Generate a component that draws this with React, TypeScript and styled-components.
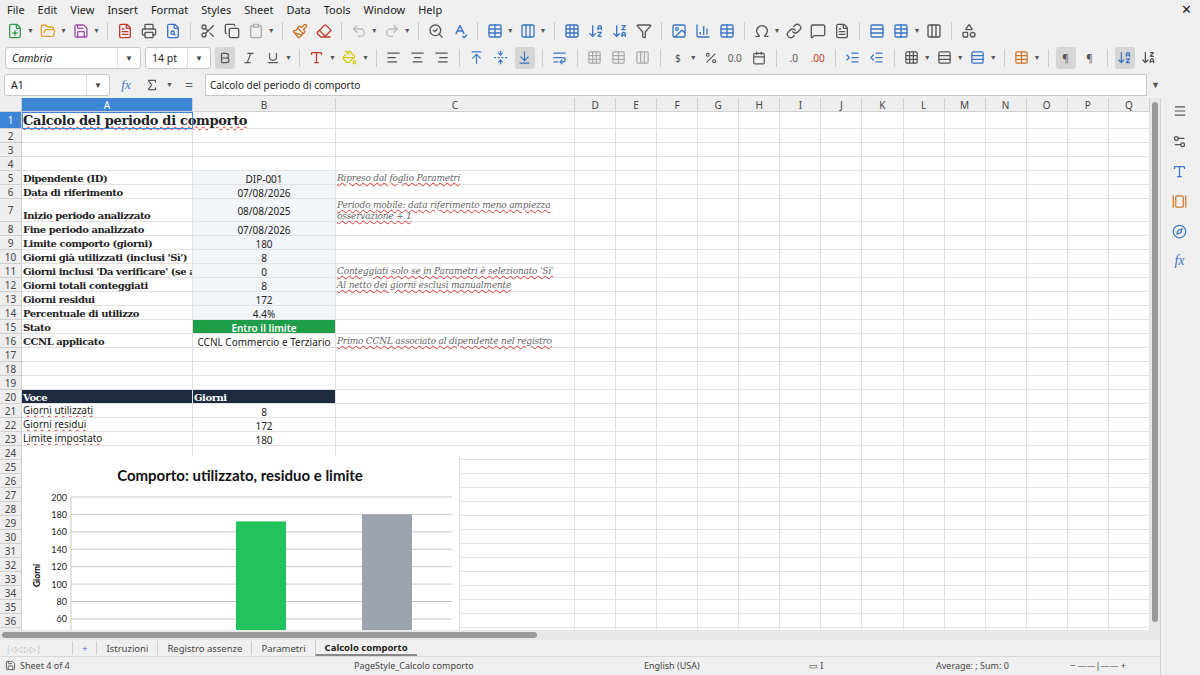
import React from "react";
import styled, { createGlobalStyle } from "styled-components";
import {
  FilePlus, FolderOpen, Save, FileText, Printer, FileSearch, Scissors, Copy, Clipboard, Paintbrush, Eraser,
  Undo2, Redo2, SearchCheck, SpellCheck, Table, Columns3, ArrowDownAZ, ArrowDownZA, Filter, Image, BarChart3,
  Omega, Link, MessageSquare, Sigma, Bold, Italic, Underline, AlignLeft, AlignCenter, AlignRight,
  ArrowUpToLine, FoldVertical, ArrowDownToLine, WrapText, Percent, Calendar, Menu, Settings2, Type, GalleryHorizontal,
  Compass, Shapes, Rows3, Grid3x3, IndentIncrease, IndentDecrease, PaintBucket
} from "lucide-react";

const G = createGlobalStyle`
  html,body{margin:0;padding:0;width:1200px;height:675px;overflow:hidden;background:#efefef;font-family:"Noto Sans","Open Sans",sans-serif;}
`;

const Page = styled.div`width:1200px;height:675px;display:flex;flex-direction:column;background:#f0f0f0;`;
const MenuBar = styled.div`height:18px;display:flex;align-items:center;gap:13px;padding:0 7px;font-size:11px;color:#222;position:relative;`;
const CloseX = styled.span`position:absolute;right:8px;top:0;font-size:13px;`;
const Tool = styled.div`height:25px;display:flex;align-items:center;gap:4px;padding:0 5px;color:#555;`;
const Tool2 = styled(Tool)`height:29px;`;
const Sep = styled.div`width:1px;height:18px;background:#ccc;margin:0 3px;`;
const Ic = styled.span<{ c?: string; on?: boolean }>`display:inline-flex;align-items:center;justify-content:center;width:20px;height:22px;border-radius:3px;color:${p => p.c || "#555"};background:${p => p.on ? "#d6d6d6" : "transparent"};font-size:10px;`;
const Caret = styled.span`font-size:7px;color:#555;margin-left:-2px;`;
const Combo = styled.div<{ w: number }>`width:${p => p.w}px;height:22px;border:1px solid #c8c8c8;border-radius:3px;background:#fff;display:flex;align-items:center;font-size:10.5px;padding-left:6px;box-sizing:border-box;position:relative;color:#222;`;
const ComboBtn = styled.span`position:absolute;right:0;top:0;bottom:0;width:22px;border-left:1px solid #ddd;display:flex;align-items:center;justify-content:center;font-size:8px;color:#444;`;
const FormulaRow = styled.div`height:25px;display:flex;align-items:center;gap:6px;padding:0 4px;`;
const Input = styled.div`flex:1;height:20px;border:1px solid #c8c8c8;background:#fff;font-size:10px;display:flex;align-items:center;padding-left:4px;color:#222;`;

const Main = styled.div`display:flex;flex:1;min-height:0;padding-top:1px;`;
const SheetArea = styled.div`width:1160px;display:flex;flex-direction:column;`;
const GridWrap = styled.div`display:flex;height:532px;`;
const Grid = styled.div`width:1150px;height:532px;overflow:hidden;position:relative;background:#fff;`;
const VScroll = styled.div`width:10px;background:#e8e8e8;position:relative;`;
const VThumb = styled.div`position:absolute;left:2px;top:4px;width:6px;height:520px;background:#9a9a9a;border-radius:3px;`;
const Row = styled.div<{ h: number }>`display:flex;height:${p => p.h}px;`;
const Cell = styled.div<{ w: number; bg?: string; align?: string; spill?: boolean }>`width:${p => p.w}px;flex:none;box-sizing:border-box;border-right:1px solid #e2e2e2;border-bottom:1px solid #e2e2e2;background:${p => p.bg || "transparent"};display:flex;align-items:flex-end;justify-content:${p => p.align || "flex-start"};overflow:${p => p.spill ? "visible" : "hidden"};white-space:nowrap;font-size:10px;color:#222;padding:0 1px;position:relative;`;
const Head = styled(Cell) <{ sel?: boolean }>`background:${p => p.sel ? "#3c84d6" : "#eeeeee"};color:${p => p.sel ? "#fff" : "#444"};align-items:center;justify-content:center;border-color:#cfcfcf;font-size:10px;`;
const Label = styled.span`font-family:"DejaVu Serif","Liberation Serif",serif;font-weight:bold;font-size:10px;letter-spacing:-0.45px;text-decoration:underline wavy #d33;text-decoration-thickness:1px;`;
const Title = styled(Label)`font-size:13px;letter-spacing:-0.3px;`;
const Note = styled.span<{ wrap?: boolean }>`font-family:"DejaVu Serif",serif;font-style:italic;font-size:9px;letter-spacing:-0.2px;color:#666;text-decoration:underline wavy #d33;text-decoration-thickness:1px;line-height:11px;white-space:${p => p.wrap ? "normal" : "nowrap"};align-self:${p => p.wrap ? "flex-start" : "flex-end"};margin-top:1px;`;
const Plain = styled.span`font-size:10px;font-family:"Noto Sans",sans-serif;text-decoration:underline wavy #d33;text-decoration-thickness:1px;`;
const Val = styled.span`align-self:flex-start;margin-top:1px;font-size:10px;`;
const SelBox = styled.div`position:absolute;left:22px;top:14px;width:171px;height:17px;border:1.5px solid #3c84d6;box-sizing:border-box;pointer-events:none;`;

const Chart = styled.div`position:absolute;left:22px;top:358px;width:437px;height:190px;background:#fff;border-right:1px solid #ddd;`;
const ChartTitle = styled.div`text-align:center;font-family:"Lato","Noto Sans",sans-serif;font-weight:bold;font-size:15px;margin-top:10px;color:#111;margin-left:-1px;`;

const HScroll = styled.div`height:10px;background:#e8e8e8;position:relative;`;
const HThumb = styled.div`position:absolute;left:2px;top:2px;width:535px;height:6px;background:#9a9a9a;border-radius:3px;`;
const Tabs = styled.div`height:16px;display:flex;align-items:center;font-size:9.5px;color:#444;`;
const Tab = styled.div<{ on?: boolean }>`padding:0 9px;border-left:1px solid #ccc;height:14px;display:flex;align-items:center;${p => p.on ? "font-weight:bold;color:#222;border-bottom:2px solid #888;" : ""}`;
const Status = styled.div`height:17px;display:flex;align-items:center;font-size:9px;color:#444;border-top:1px solid #d8d8d8;`;
const Side = styled.div`width:37px;display:flex;flex-direction:column;align-items:center;gap:8px;padding-top:2px;border-left:1px solid #d0d0d0;`;

const colW = [22, 171, 143, 239, ...Array(14).fill(41.07)];
const colN = ["", "A", "B", "C", "D", "E", "F", "G", "H", "I", "J", "K", "L", "M", "N", "O", "P", "Q"];

type RD = { a?: React.ReactNode; b?: React.ReactNode; c?: React.ReactNode; h?: number; bbg?: string; dark?: boolean; spillA?: boolean };
const L = (t: string) => <Label>{t}</Label>;
const N = (t: string) => <Note>{t}</Note>;
const V = (t: string) => <Val>{t}</Val>;
const rows: RD[] = [
  { a: <Title>Calcolo del periodo di comporto</Title>, h: 17, spillA: true },
  {}, {}, {},
  { a: L("Dipendente (ID)"), b: V("DIP-001"), c: N("Ripreso dal foglio Parametri"), bbg: "#f3f6f9" },
  { a: L("Data di riferimento"), b: V("07/08/2026"), bbg: "#f3f6f9" },
  { a: L("Inizio periodo analizzato"), b: <Val style={{ marginTop: 5 }}>08/08/2025</Val>, c: <Note wrap>Periodo mobile: data riferimento meno ampiezza osservazione + 1</Note>, h: 23, bbg: "#f3f6f9" },
  { a: L("Fine periodo analizzato"), b: V("07/08/2026"), bbg: "#f3f6f9" },
  { a: L("Limite comporto (giorni)"), b: V("180"), bbg: "#f3f6f9" },
  { a: L("Giorni già utilizzati (inclusi 'Sì')"), b: V("8"), bbg: "#f3f6f9" },
  { a: <Label>Giorni inclusi 'Da verificare' (se abili<span style={{ fontSize: 7 }}>▸</span></Label>, b: V("0"), c: N("Conteggiati solo se in Parametri è selezionato 'Sì'"), bbg: "#f3f6f9" },
  { a: L("Giorni totali conteggiati"), b: V("8"), c: N("Al netto dei giorni esclusi manualmente"), bbg: "#f3f6f9" },
  { a: L("Giorni residui"), b: V("172"), bbg: "#f3f6f9" },
  { a: L("Percentuale di utilizzo"), b: V("4.4%"), bbg: "#f3f6f9" },
  { a: L("Stato"), b: <Val style={{ color: "#fff", fontWeight: 600 }}>Entro il limite</Val>, bbg: "#1e9e48" },
  { a: L("CCNL applicato"), b: V("CCNL Commercio e Terziario"), c: N("Primo CCNL associato al dipendente nel registro") },
  {}, {}, {},
  { a: <Label style={{ color: "#fff", textDecoration: "none" }}>Voce</Label>, b: <Label style={{ color: "#fff", textDecoration: "none" }}>Giorni</Label>, dark: true },
  { a: <Plain>Giorni utilizzati</Plain>, b: V("8") },
  { a: <Plain>Giorni residui</Plain>, b: V("172") },
  { a: <Plain>Limite impostato</Plain>, b: V("180") },
];
while (rows.length < 38) rows.push({});

function ChartSvg() {
  const y = (v: number) => 13 + (200 - v) * 0.871;
  const ticks = [200, 180, 160, 140, 120, 100, 80, 60, 40];
  return (
    <svg width="437" height="160" style={{ display: "block" }}>
      {ticks.map(t => (
        <g key={t}>
          <line x1={49} x2={430} y1={y(t)} y2={y(t)} stroke="#c8c8c8" strokeWidth="1" />
          <text x={45} y={y(t) + 3.5} fontSize="9" textAnchor="end" fontFamily="Lato, sans-serif" fill="#222">{t}</text>
        </g>
      ))}
      <line x1={49} x2={49} y1={y(200)} y2={160} stroke="#c8c8c8" />
      <rect x={214} y={y(172)} width={50} height={200} fill="#22c35e" />
      <rect x={340} y={y(180)} width={50} height={200} fill="#9ca3ad" />
      <text transform={`translate(18,${y(110)}) rotate(-90)`} fontSize="8.5" fontWeight="bold" textAnchor="middle" fontFamily="Lato, sans-serif">Giorni</text>
    </svg>
  );
}

export default function App() {
  return (
    <Page>
      <G />
      <MenuBar>
        {["File", "Edit", "View", "Insert", "Format", "Styles", "Sheet", "Data", "Tools", "Window", "Help"].map(m => <span key={m}>{m}</span>)}
        <CloseX>✕</CloseX>
      </MenuBar>
      <Tool>
        <Ic c="#2e9b4a"><FilePlus size={16} /></Ic><Caret>▼</Caret>
        <Ic c="#e0a330"><FolderOpen size={16} /></Ic><Caret>▼</Caret>
        <Ic c="#9c4ea8"><Save size={16} /></Ic><Caret>▼</Caret><Sep />
        <Ic c="#c0392b"><FileText size={16} /></Ic><Ic><Printer size={16} /></Ic><Ic c="#3a76c4"><FileSearch size={16} /></Ic><Sep />
        <Ic><Scissors size={16} /></Ic><Ic><Copy size={16} /></Ic><Ic c="#aaa"><Clipboard size={16} /></Ic><Caret>▼</Caret><Sep />
        <Ic c="#d0762b"><Paintbrush size={16} /></Ic><Ic c="#c0392b"><Eraser size={16} /></Ic><Sep />
        <Ic c="#bbb"><Undo2 size={16} /></Ic><Caret>▼</Caret><Ic c="#bbb"><Redo2 size={16} /></Ic><Caret>▼</Caret><Sep />
        <Ic><SearchCheck size={16} /></Ic><Ic c="#3a76c4"><SpellCheck size={16} /></Ic><Sep />
        <Ic c="#3a76c4"><Table size={16} /></Ic><Caret>▼</Caret><Ic c="#3a76c4"><Columns3 size={16} /></Ic><Caret>▼</Caret><Sep />
        <Ic c="#3a76c4"><Grid3x3 size={16} /></Ic><Ic c="#3a76c4"><ArrowDownAZ size={16} /></Ic><Ic c="#3a76c4"><ArrowDownZA size={16} /></Ic><Ic><Filter size={16} /></Ic><Sep />
        <Ic c="#3a76c4"><Image size={16} /></Ic><Ic c="#3a76c4"><BarChart3 size={16} /></Ic><Ic c="#3a76c4"><Table size={16} /></Ic><Sep />
        <Ic><Omega size={16} /></Ic><Caret>▼</Caret><Ic><Link size={16} /></Ic><Ic><MessageSquare size={16} /></Ic><Ic><FileText size={16} /></Ic><Sep />
        <Ic c="#3a76c4"><Rows3 size={16} /></Ic><Ic c="#3a76c4"><Table size={16} /></Ic><Caret>▼</Caret><Ic><Columns3 size={16} /></Ic><Sep /><Ic><Shapes size={16} /></Ic>
      </Tool>
      <Tool2>
        <Combo w={136}><i>Cambria</i><ComboBtn>▼</ComboBtn></Combo>
        <Combo w={66}>14 pt<ComboBtn>▼</ComboBtn></Combo>
        <Ic on><Bold size={14} /></Ic><Ic><Italic size={14} /></Ic><Ic><Underline size={14} /></Ic><Caret>▼</Caret><Sep />
        <Ic c="#c0392b"><Type size={15} /></Ic><Caret>▼</Caret><Ic c="#d4c800"><PaintBucket size={15} /></Ic><Caret>▼</Caret><Sep />
        <Ic><AlignLeft size={15} /></Ic><Ic><AlignCenter size={15} /></Ic><Ic><AlignRight size={15} /></Ic><Sep />
        <Ic c="#3a76c4"><ArrowUpToLine size={15} /></Ic><Ic c="#3a76c4"><FoldVertical size={15} /></Ic><Ic on c="#3a76c4"><ArrowDownToLine size={15} /></Ic><Sep />
        <Ic c="#3a76c4"><WrapText size={15} /></Ic><Sep /><Ic c="#aaa"><Grid3x3 size={15} /></Ic><Ic c="#aaa"><Table size={15} /></Ic><Ic c="#aaa"><Columns3 size={15} /></Ic><Sep />
        <Ic>$</Ic><Caret>▼</Caret><Ic><Percent size={14} /></Ic><Ic>0.0</Ic><Ic><Calendar size={14} /></Ic><Sep />
        <Ic>.0</Ic><Ic c="#c0392b">.00</Ic><Sep /><Ic c="#3a76c4"><IndentIncrease size={15} /></Ic><Ic c="#3a76c4"><IndentDecrease size={15} /></Ic><Sep />
        <Ic><Grid3x3 size={15} /></Ic><Caret>▼</Caret><Ic><Rows3 size={15} /></Ic><Caret>▼</Caret><Ic c="#3a76c4"><Rows3 size={15} /></Ic><Caret>▼</Caret><Sep />
        <Ic c="#d0762b"><Table size={15} /></Ic><Caret>▼</Caret><Sep /><Ic on>¶</Ic><Ic>¶</Ic><Sep /><Ic on c="#3a76c4"><ArrowDownAZ size={15} /></Ic><Ic><ArrowDownZA size={15} /></Ic>
      </Tool2>
      <FormulaRow>
        <Combo w={106}>A1<ComboBtn>▼</ComboBtn></Combo>
        <Ic c="#3a76c4"><i style={{ fontFamily: "serif", fontSize: 13 }}>fx</i></Ic>
        <Ic><Sigma size={14} /></Ic><Caret>▼</Caret><Ic style={{ fontSize: 14 }}>=</Ic>
        <Input>Calcolo del periodo di comporto</Input>
        <Caret style={{ fontSize: 9, marginRight: 36 }}>▼</Caret>
      </FormulaRow>
      <Main>
        <SheetArea>
          <GridWrap>
            <Grid>
              <Row h={14}>
                {colN.map((n, i) => <Head key={i} w={colW[i]} sel={n === "A"}>{n}</Head>)}
              </Row>
              {rows.map((r, i) => (
                <Row key={i} h={r.h || 14}>
                  <Head w={22} sel={i === 0}>{i + 1}</Head>
                  <Cell w={171} spill={r.spillA} bg={r.dark ? "#1e2a3e" : undefined}>{r.a}</Cell>
                  <Cell w={143} align={r.dark ? "flex-start" : "center"} bg={r.dark ? "#1e2a3e" : r.bbg}>{r.b}</Cell>
                  <Cell w={239} spill>{r.c}</Cell>
                  {colW.slice(4).map((w, j) => <Cell key={j} w={w} />)}
                </Row>
              ))}
              <SelBox />
              <Chart>
                <ChartTitle>Comporto: utilizzato, residuo e limite</ChartTitle>
                <ChartSvg />
              </Chart>
            </Grid>
            <VScroll><VThumb /></VScroll>
          </GridWrap>
          <HScroll><HThumb /></HScroll>
          <Tabs>
            <span style={{ color: "#bbb", width: 66, paddingLeft: 6, fontSize: 8, overflow: "hidden", whiteSpace: "nowrap" }}>|◁◁ ▷▷|</span>
            <Tab style={{ color: "#3a76c4" }}>+</Tab>
            <Tab>Istruzioni</Tab><Tab>Registro assenze</Tab><Tab>Parametri</Tab><Tab on>Calcolo comporto</Tab>
          </Tabs>
          <Status>
            <Ic><Save size={11} /></Ic>
            <span style={{ width: 334 }}>Sheet 4 of 4</span>
            <span style={{ width: 290 }}>PageStyle_Calcolo comporto</span>
            <span style={{ width: 165 }}>English (USA)</span>
            <span style={{ width: 127 }}>▭ I</span>
            <span style={{ width: 134 }}>Average: ; Sum: 0</span>
            <span>−  ——|——  +</span>
          </Status>
        </SheetArea>
        <Side>
          <Ic><Menu size={14} /></Ic>
          <Ic><Settings2 size={15} /></Ic>
          <Ic c="#3a76c4"><Type size={15} /></Ic>
          <Ic c="#d0762b"><GalleryHorizontal size={15} /></Ic>
          <Ic c="#3a76c4"><Compass size={15} /></Ic>
          <Ic c="#3a76c4"><i style={{ fontFamily: "serif", fontSize: 14 }}>fx</i></Ic>
        </Side>
      </Main>
    </Page>
  );
}
